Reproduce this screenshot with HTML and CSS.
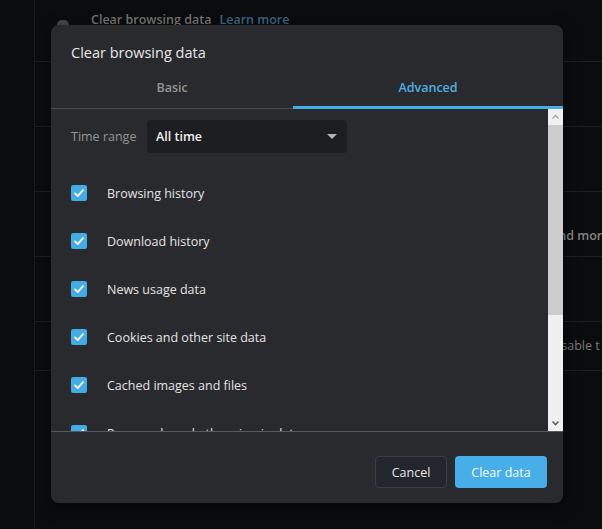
FILE: index.html
```html
<!DOCTYPE html>
<html>
<head>
<meta charset="utf-8">
<link rel="stylesheet" href="styles.css">
</head>
<body>
<div class="page">
  <div class="rail"></div>
  <div class="main">
    <div class="row row-top">
      <span class="bg-icon"></span>
      <span class="bg-title">Clear browsing data</span>
      <span class="bg-link">Learn more</span>
    </div>
    <div class="row row-std"></div>
    <div class="row row-std"></div>
    <div class="row row-std"><span class="bg-peek bg-peek-bold">and more</span></div>
    <div class="row row-std"></div>
    <div class="row row-short"><span class="bg-peek bg-peek-light">Disable t</span></div>
  </div>
</div>

<div class="dialog">
  <div class="dlg-title">Clear browsing data</div>
  <div class="tabs">
    <div class="tab">Basic</div>
    <div class="tab tab-active">Advanced</div>
  </div>
  <div class="dlg-body">
    <div class="scroll-content">
      <div class="time-row">
        <span class="time-label">Time range</span>
        <div class="select">
          <span class="select-value">All time</span>
          <span class="caret"></span>
        </div>
      </div>
      <div class="checks">
        <div class="check-row"><span class="cb"><svg viewBox="0 0 16 16" width="16" height="16"><polyline points="4,8.3 6.8,11 12,5.2" fill="none" stroke="#fff" stroke-width="1.8" stroke-linecap="round" stroke-linejoin="round"/></svg></span><span class="check-label">Browsing history</span></div>
        <div class="check-row"><span class="cb"><svg viewBox="0 0 16 16" width="16" height="16"><polyline points="4,8.3 6.8,11 12,5.2" fill="none" stroke="#fff" stroke-width="1.8" stroke-linecap="round" stroke-linejoin="round"/></svg></span><span class="check-label">Download history</span></div>
        <div class="check-row"><span class="cb"><svg viewBox="0 0 16 16" width="16" height="16"><polyline points="4,8.3 6.8,11 12,5.2" fill="none" stroke="#fff" stroke-width="1.8" stroke-linecap="round" stroke-linejoin="round"/></svg></span><span class="check-label">News usage data</span></div>
        <div class="check-row"><span class="cb"><svg viewBox="0 0 16 16" width="16" height="16"><polyline points="4,8.3 6.8,11 12,5.2" fill="none" stroke="#fff" stroke-width="1.8" stroke-linecap="round" stroke-linejoin="round"/></svg></span><span class="check-label">Cookies and other site data</span></div>
        <div class="check-row"><span class="cb"><svg viewBox="0 0 16 16" width="16" height="16"><polyline points="4,8.3 6.8,11 12,5.2" fill="none" stroke="#fff" stroke-width="1.8" stroke-linecap="round" stroke-linejoin="round"/></svg></span><span class="check-label">Cached images and files</span></div>
        <div class="check-row"><span class="cb"><svg viewBox="0 0 16 16" width="16" height="16"><polyline points="4,8.3 6.8,11 12,5.2" fill="none" stroke="#fff" stroke-width="1.8" stroke-linecap="round" stroke-linejoin="round"/></svg></span><span class="check-label">Passwords and other sign-in data</span></div>
        <div class="check-row"><span class="cb"><svg viewBox="0 0 16 16" width="16" height="16"><polyline points="4,8.3 6.8,11 12,5.2" fill="none" stroke="#fff" stroke-width="1.8" stroke-linecap="round" stroke-linejoin="round"/></svg></span><span class="check-label">Autofill form data</span></div>
      </div>
    </div>
    <div class="scrollbar">
      <div class="sb-btn"><svg viewBox="0 0 15 16" width="15" height="16"><polyline points="4.5,9.5 7.5,6.5 10.5,9.5" fill="none" stroke="#a6a6a6" stroke-width="1.4"/></svg></div>
      <div class="sb-thumb"></div>
      <div class="sb-track"></div>
      <div class="sb-btn"><svg viewBox="0 0 15 16" width="15" height="16"><polyline points="4.5,6.5 7.5,9.5 10.5,6.5" fill="none" stroke="#606060" stroke-width="1.6"/></svg></div>
    </div>
  </div>
  <div class="dlg-footer">
    <button class="btn btn-cancel">Cancel</button>
    <button class="btn btn-primary">Clear data</button>
  </div>
</div>
</body>
</html>
```
FILE: styles.css
```css
* { box-sizing: border-box; }
html, body { margin: 0; padding: 0; }
body {
  width: 602px;
  height: 529px;
  overflow: hidden;
  background: #0b0c0e;
  font-family: "Open Sans", "Noto Sans", sans-serif;
  position: relative;
}
.page {
  display: flex;
  height: 529px;
}
.rail {
  width: 35px;
  border-right: 1px solid #1c1d20;
  flex: none;
}
.main {
  flex: 1;
  display: flex;
  flex-direction: column;
}
.row {
  border-bottom: 1px solid #1e1f22;
  display: flex;
  align-items: flex-start;
  white-space: nowrap;
  overflow: hidden;
}
.row-top {
  height: 62px;
  padding: 10px 0 0 22px;
  font-size: 12.5px;
  line-height: 18px;
}
.row-std { height: 65px; }
.row-short { height: 49px; }
.bg-icon {
  width: 12px;
  height: 10px;
  margin-top: 10px;
  border-radius: 5px 5px 1px 1px;
  background: #46474a;
  flex: none;
}
.bg-title {
  margin-left: 22px;
  margin-top: 1px;
  color: #767676;
  font-weight: 600;
}
.bg-link {
  margin-left: 8px;
  margin-top: 1px;
  color: #3c6886;
  font-weight: 600;
}
.bg-peek {
  font-size: 12.5px;
  color: #7a7a7a;
  line-height: 18px;
}
.bg-peek-bold {
  margin-left: 516px;
  margin-top: 35px;
  font-weight: 600;
  color: #858585;
}
.bg-peek-light {
  margin-left: 514px;
  margin-top: 15px;
}

.dialog {
  position: absolute;
  left: 51px;
  top: 25px;
  width: 512px;
  height: 478px;
  background: #292a2d;
  border-radius: 8px;
  overflow: hidden;
  display: flex;
  flex-direction: column;
  box-shadow: 0 4px 16px rgba(0,0,0,0.5);
}
.dlg-title {
  height: 43px;
  padding: 18px 20px 0;
  font-size: 14.5px;
  line-height: 20px;
  color: #e8e8e8;
  flex: none;
}
.tabs {
  display: flex;
  height: 41px;
  border-bottom: 1px solid #4b4c4f;
  flex: none;
}
.tab {
  flex: 1 1 auto;
  text-align: center;
  font-size: 12.5px;
  font-weight: 600;
  color: #949494;
  line-height: 38px;
  padding-top: 1px;
  position: relative;
}
.tab-active { color: #4cb0e6; }
.tab-active::after {
  content: "";
  position: absolute;
  left: 0;
  right: 0;
  bottom: -1px;
  height: 3px;
  background: #45aee6;
}
.dlg-body {
  display: flex;
  height: 323px;
  border-bottom: 1px solid #58595c;
  flex: none;
}
.scroll-content {
  flex: 1;
  overflow: hidden;
  padding: 11px 20px 0;
}
.time-row {
  display: flex;
  align-items: center;
  gap: 12px;
}
.time-label {
  width: 64px;
  font-size: 12.5px;
  color: #959595;
  white-space: nowrap;
}
.select {
  width: 200px;
  height: 33px;
  background: #1d1e21;
  border-radius: 4px;
  display: flex;
  align-items: center;
  justify-content: space-between;
  padding: 0 8px 0 9px;
}
.select-value {
  font-size: 12.5px;
  font-weight: 600;
  color: #f0f0f0;
}
.caret {
  width: 0;
  height: 0;
  border-left: 5px solid transparent;
  border-right: 5px solid transparent;
  border-top: 5px solid #b5b5b5;
  margin-right: 2px;
}
.checks {
  margin-top: 16px;
  display: flex;
  flex-direction: column;
}
.check-row {
  height: 48px;
  display: flex;
  align-items: center;
  gap: 20px;
}
.cb {
  width: 16px;
  height: 16px;
  border-radius: 2px;
  background: #44ace5;
  flex: none;
  display: flex;
}
.check-label {
  font-size: 12.5px;
  color: #e4e4e4;
  white-space: nowrap;
}
.scrollbar {
  width: 15px;
  flex: none;
  display: flex;
  flex-direction: column;
  background: #f0f0f0;
}
.sb-btn {
  height: 16px;
  flex: none;
  display: flex;
  background: #f0f0f0;
}
.sb-thumb {
  height: 190px;
  flex: none;
  background: #cdcdcd;
}
.sb-track { flex: 1; }
.dlg-footer {
  flex: 1;
  display: flex;
  justify-content: flex-end;
  align-items: flex-start;
  gap: 8px;
  padding: 24px 16px 0;
}
.btn {
  height: 32px;
  border-radius: 4px;
  font-family: "Open Sans", "Noto Sans", sans-serif;
  font-size: 12.5px;
  cursor: pointer;
}
.btn-cancel {
  width: 72px;
  background: #23272d;
  border: 1px solid #3a3e45;
  color: #e6e6e6;
}
.btn-primary {
  width: 92px;
  background: #48aee7;
  border: none;
  color: #f4fbff;
}
```
